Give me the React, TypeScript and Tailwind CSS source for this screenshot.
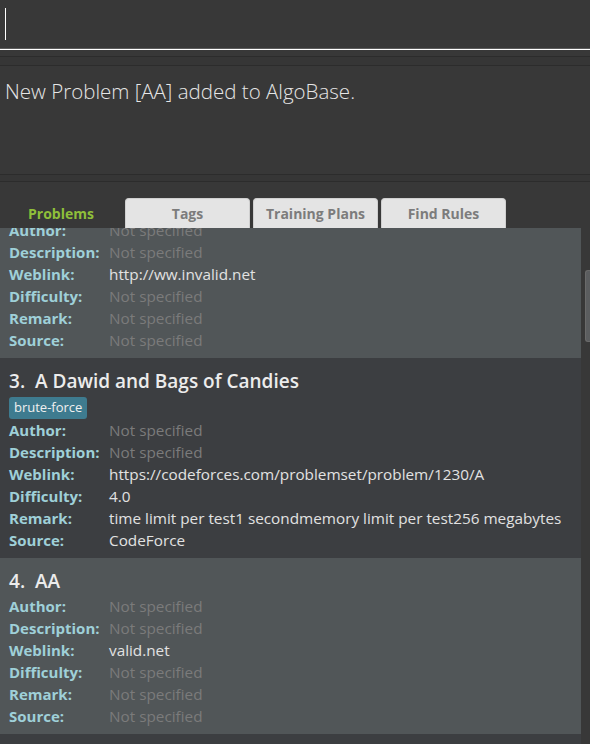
const font = "font-['Open_Sans','Noto_Sans',sans-serif]";

type Problem = {
	no: number;
	title?: string;
	tags?: string[];
	author?: string;
	description?: string;
	weblink?: string;
	difficulty?: string;
	remark?: string;
	source?: string;
};

// first card is scrolled partly out of view, only its fields show
const problems: Problem[] = [
	{ no: 2, weblink: 'http://ww.invalid.net' },
	{
		no: 3,
		title: 'A Dawid and Bags of Candies',
		tags: ['brute-force'],
		weblink: 'https://codeforces.com/problemset/problem/1230/A',
		difficulty: '4.0',
		remark: 'time limit per test1 secondmemory limit per test256 megabytes',
		source: 'CodeForce',
	},
	{ no: 4, title: 'AA', weblink: 'valid.net' },
];

const Row = ({ label, value }: { label: string; value?: string }) => (
	<div className="flex h-[22px] items-center">
		<span className="w-[100px] text-[15px] font-bold text-[#9fd0d8]">{label}</span>
		{value ? (
			<span className="text-[15.3px] text-[#e2e2e2]">{value}</span>
		) : (
			<span className="text-[15.3px] text-[#7b7b7b]">Not specified</span>
		)}
	</div>
);

const ProblemCard = ({ p, odd }: { p: Problem; odd: boolean }) => (
	<div className={`pl-[9px] pb-[7px] ${p.title ? 'pt-[9px]' : '-mt-[9px]'} ${odd ? 'bg-[#515658]' : 'bg-[#3c3e41]'}`}>
		{p.title && (
			<div className="h-[28px] flex items-center text-[19px] font-semibold text-[#ececec]">
				{p.no}.&nbsp;&nbsp;{p.title}
			</div>
		)}
		{p.tags && (
			<div className="mt-[2px] flex gap-1">
				{p.tags.map((t) => (
					<span key={t} className="h-[22px] px-[5px] flex items-center rounded-[3px] bg-[#3e7b8f] text-[13px] text-[#f0f0f0]">
						{t}
					</span>
				))}
			</div>
		)}
		<Row label="Author:" value={p.author} />
		<Row label="Description:" value={p.description} />
		<Row label="Weblink:" value={p.weblink} />
		<Row label="Difficulty:" value={p.difficulty} />
		<Row label="Remark:" value={p.remark} />
		<Row label="Source:" value={p.source} />
	</div>
);

const tabs = ['Problems', 'Tags', 'Training Plans', 'Find Rules'];

const App = () => {
	return (
		<div className={`w-[590px] h-[744px] overflow-hidden bg-[#383838] flex flex-col ${font}`}>
			{/* command box */}
			<div className="h-[48px] px-[5px] flex items-center">
				<div className="w-px h-[32px] bg-white" />
			</div>
			<div className="h-px bg-[#5c5c5c]" />
			<div className="h-px bg-white" />
			<div className="h-[6px]" />
			<div className="h-px bg-[#2c2c2c]" />
			<div className="h-[8px] bg-[#363636]" />
			<div className="h-px bg-[#2c2c2c]" />

			{/* result display */}
			<div className="h-[108px] px-[5px] pt-[10px] text-[20.5px] font-light text-[#e6e6e6]">
				New Problem [AA] added to AlgoBase.
			</div>
			<div className="h-px bg-[#2c2c2c]" />
			<div className="h-[6px] bg-[#363636]" />
			<div className="h-px bg-[#2c2c2c]" />

			{/* tabs */}
			<div className="h-[46px] flex items-end gap-[3px]">
				{tabs.map((t, i) => (
					<div
						key={t}
						className={`h-[30px] flex items-center justify-center text-[14px] font-bold ${
							i === 0
								? 'w-[122px] text-[#8fbf3a]'
								: 'w-[125px] bg-[#e4e4e4] rounded-t-[4px] text-[#7c7c7c] border border-b-0 border-[#cfcfcf]'
						}`}
					>
						{t}
					</div>
				))}
			</div>

			{/* list */}
			<div className="flex-1 flex overflow-hidden">
				<div className="w-[581px] overflow-hidden bg-[#3c3e41]">
					{problems.map((p, i) => (
						<ProblemCard key={p.no} p={p} odd={i % 2 === 0} />
					))}
				</div>
				<div className="flex-1 pt-[42px] pl-[4px]">
					<div className="h-[72px] rounded-l-[3px] bg-[#5b5d5f] border border-r-0 border-[#6a6a6a]" />
				</div>
			</div>
		</div>
	);
};

export default App;
